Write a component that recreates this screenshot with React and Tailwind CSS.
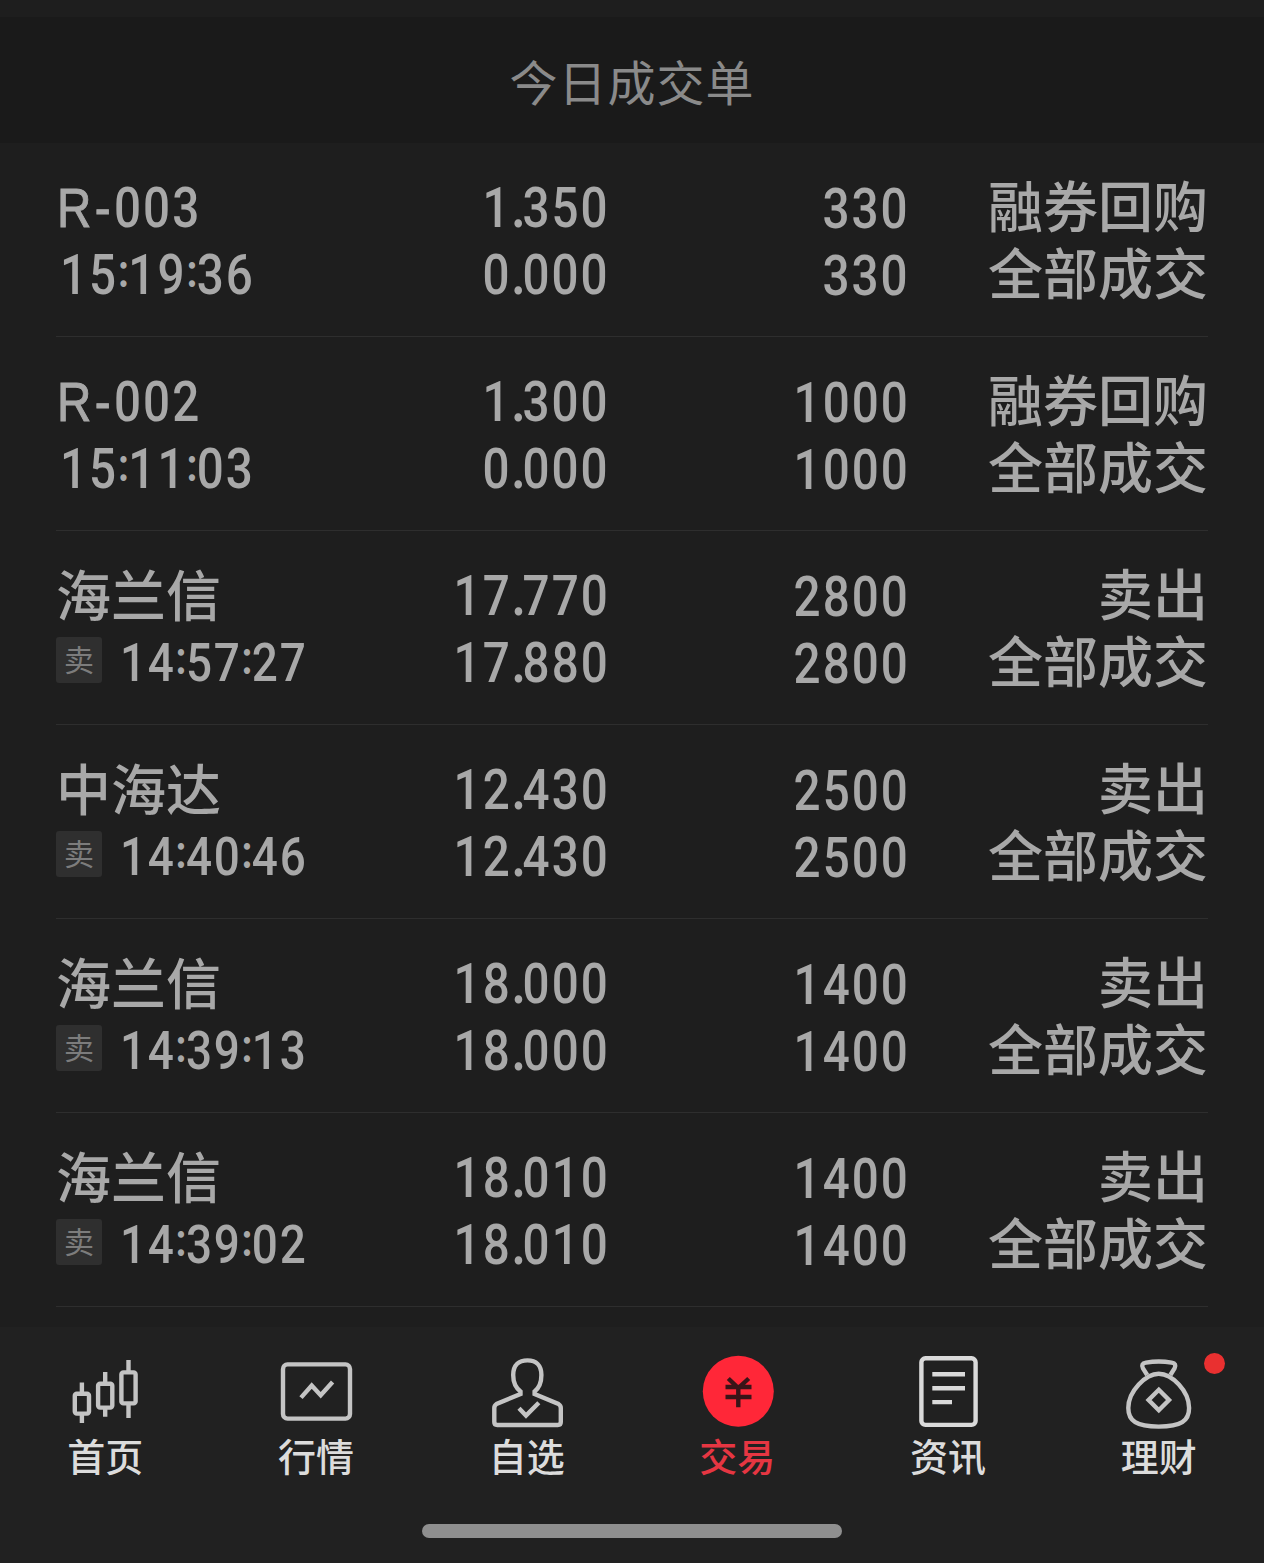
const trades = [
  { name: "R-003", time: "15:19:36", price: ["1.350", "0.000"], qty: ["330", "330"], side: "融券回购" },
  { name: "R-002", time: "15:11:03", price: ["1.300", "0.000"], qty: ["1000", "1000"], side: "融券回购" },
  { name: "海兰信", time: "14:57:27", sell: true, price: ["17.770", "17.880"], qty: ["2800", "2800"], side: "卖出" },
  { name: "中海达", time: "14:40:46", sell: true, price: ["12.430", "12.430"], qty: ["2500", "2500"], side: "卖出" },
  { name: "海兰信", time: "14:39:13", sell: true, price: ["18.000", "18.000"], qty: ["1400", "1400"], side: "卖出" },
  { name: "海兰信", time: "14:39:02", sell: true, price: ["18.010", "18.010"], qty: ["1400", "1400"], side: "卖出" },
];

const marks = {
  ".": "font-bold tracking-[-3.5px]",
  ":": "align-[7px] text-[46px] leading-none font-bold tracking-[-0.8px]",
  "R-": "font-['Liberation_Sans',sans-serif] leading-none tracking-[4px] [-webkit-text-stroke:1px_#a8a8a8]",
};

// Narrow numerals: condensed digits with tighter, heavier punctuation.
function Num({ children, className }) {
  return (
    <span className={`block whitespace-nowrap font-[Roboto,sans-serif] font-medium scale-x-[0.85] ${className}`}>
      {children.split(/([.:]|R-)/).map((part, i) => (
        <span key={i} className={marks[part]}>{part}</span>
      ))}
    </span>
  );
}

const numBase = "text-[56px] tracking-[2.4px]";

function TradeRow({ t }) {
  return (
    <li className="flex h-[194px] justify-between border-b border-[#2e2e2e] pt-8 leading-[67px]">
      <div className="w-[300px]">
        {t.sell ? (
          <div className="-mt-[4px] mb-[4px] h-[67px] whitespace-nowrap">{t.name}</div>
        ) : (
          <div className="flex h-[67px]">
            <Num className="ml-[1px] origin-left text-[56px] tracking-[2.4px]">
              {t.name}
            </Num>
          </div>
        )}
        <div className="flex h-[67px] items-center">
          {t.sell && (
            <span className="mr-[18px] -mt-[8px] flex size-[46px] shrink-0 items-center justify-center rounded-[3px] bg-[#2f2f2f] pb-[3px] text-[30px] leading-none font-normal text-[#7c7c7c]">
              卖
            </span>
          )}
          <Num className={`h-[67px] origin-left ${t.sell ? "-mt-[2px] text-[54px] tracking-[2px]" : "ml-[4px] text-[56px] tracking-[2.3px]"}`}>
            {t.time}
          </Num>
        </div>
      </div>
      <div className="flex w-[254px] flex-col items-end">
        {t.price.map((p, i) => <Num key={i} className={`${numBase} h-[67px] origin-right`}>{p}</Num>)}
      </div>
      <div className="flex w-[300px] flex-col items-end pt-[1px]">
        {t.qty.map((q, i) => <Num key={i} className={`${numBase} h-[67px] origin-right`}>{q}</Num>)}
      </div>
      <div className="-mt-[5px] flex-1 text-right whitespace-nowrap">
        <div className="h-[67px]">{t.side}</div>
        <div className="h-[67px]">全部成交</div>
      </div>
    </li>
  );
}

function Icon({ children, color = "#c4c4c4" }) {
  return (
    <svg width="80" height="80" viewBox="0 0 80 80" fill="none" stroke={color} strokeWidth="4.4">
      {children}
    </svg>
  );
}

const tabs = [
  {
    label: "首页",
    icon: (
      <Icon>
        <rect x="9.8" y="43.8" width="14.2" height="19.8" rx="2" />
        <path d="M16.9 32.5V43.8M16.9 63.6V73" />
        <rect x="33.1" y="33.8" width="14.2" height="23.8" rx="2" />
        <path d="M40.2 22V33.8M40.2 57.6V66.7" />
        <rect x="56.4" y="22.4" width="14.2" height="31" rx="2" />
        <path d="M63.5 10V22.4M63.5 53.4V68" />
      </Icon>
    ),
  },
  {
    label: "行情",
    icon: (
      <Icon>
        <rect x="7" y="14.4" width="67" height="54.2" rx="4.5" />
        <path d="M25 47.6L35.7 35.6L44.7 45.3L56.6 32" />
      </Icon>
    ),
  },
  {
    label: "自选",
    icon: (
      <Icon>
        <path d="M33.5 41.5C29 38 26.2 33 26.2 25C26.2 15 32 10.4 40.5 10.4C49 10.4 54.4 15 54.4 25C54.4 33 52 38 47.6 41.5V44L71.5 54Q73.8 55.5 73.8 58V72Q73.8 75 70.8 75H10.3Q7.3 75 7.3 72V58Q7.3 55.5 9.5 54L33.5 44Z" />
        <path d="M32 58.3L39 65.5L51.8 52.7" />
      </Icon>
    ),
  },
  {
    label: "交易",
    active: true,
    icon: (
      <Icon color="#3a1418">
        <circle cx="41.3" cy="41.3" r="35.5" fill="#ff2738" stroke="none" />
        <path d="M31.3 28.5L41.3 38L51.7 28.5M28.5 37H54.5M28.5 47H54.5M41.3 37V57.3" />
      </Icon>
    ),
  },
  {
    label: "资讯",
    icon: (
      <Icon color="#dadada">
        <rect x="13.4" y="8.3" width="54.2" height="66.6" rx="4" />
        <path d="M24.3 24.3H57M24.3 38.3H57M24.3 52.1H44" />
      </Icon>
    ),
  },
  {
    label: "理财",
    dot: true,
    icon: (
      <Icon>
        <path d="M39.7 23.7C53 23.7 70.1 41 70.1 58C70.1 71 62 76.6 39.7 76.6C17.5 76.6 9.3 71 9.3 58C9.3 41 27 23.7 39.7 23.7Z" />
        <path d="M28.2 25L24 18.5Q21.5 13.5 27 12.6Q39.7 10.4 52.6 12.6Q58 13.5 55.5 18.5L51.4 25" />
        <path d="M39.8 39.8L50 50L39.8 60.2L29.6 50Z" />
      </Icon>
    ),
  },
];

export default function App() {
  return (
    <div className="flex h-[1563px] w-[1264px] flex-col overflow-hidden bg-[#1e1e1e] font-['Noto_Sans_CJK_SC',sans-serif]">
      <header className="mt-[17px] flex h-[126px] shrink-0 items-center justify-center bg-[#1a1a1a] text-[48px] font-normal tracking-[1px] text-[#8a8a8a]">
        今日成交单
      </header>
      <ul className="h-[1184px] shrink-0 px-14 text-[55px] font-medium text-[#a8a8a8]">
        {trades.map((t, i) => <TradeRow key={i} t={t} />)}
      </ul>
      <nav className="flex grow flex-col items-center bg-[#212121] pt-[23px]">
        <div className="grid w-full grid-cols-6">
          {tabs.map((tab) => (
            <div key={tab.label} className="relative flex flex-col items-center">
              {tab.icon}
              <span className={`h-[56px] text-[38px] leading-[50px] font-medium ${tab.active ? "text-[#e63642]" : "text-[#dcdcdc]"}`}>
                {tab.label}
              </span>
              {tab.dot && <i className="absolute top-[3px] right-[39px] size-[21px] rounded-full bg-[#e93030]" />}
            </div>
          ))}
        </div>
        <div className="mt-[38px] h-[14px] w-[420px] rounded-full bg-[#8f8f8f]" />
      </nav>
    </div>
  );
}
